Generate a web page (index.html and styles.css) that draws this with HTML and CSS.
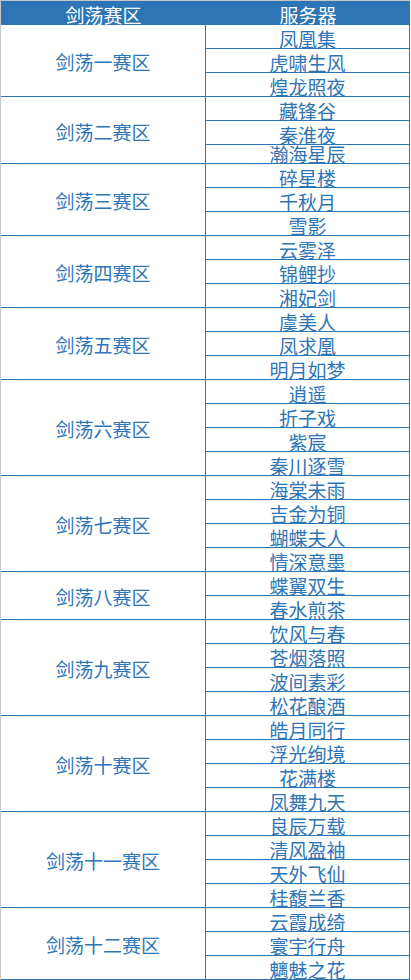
FILE: index.html
```html
<!DOCTYPE html>
<html lang="zh">
<head>
<meta charset="utf-8">
<title>剑荡赛区</title>
<link rel="stylesheet" href="styles.css">
</head>
<body>
<div class="sheet">
  <div class="head">
    <div class="head-zone">剑荡赛区</div>
    <div class="head-srv">服务器</div>
  </div>
  <div class="group">
    <div class="zone">剑荡一赛区</div>
    <div class="servers"><div class="srv">凤凰集</div><div class="srv">虎啸生风</div><div class="srv">煌龙照夜</div></div>
  </div>
  <div class="group">
    <div class="zone">剑荡二赛区</div>
    <div class="servers"><div class="srv">藏锋谷</div><div class="srv">秦淮夜</div><div class="srv short">瀚海星辰</div></div>
  </div>
  <div class="group">
    <div class="zone">剑荡三赛区</div>
    <div class="servers"><div class="srv">碎星楼</div><div class="srv">千秋月</div><div class="srv">雪影</div></div>
  </div>
  <div class="group">
    <div class="zone">剑荡四赛区</div>
    <div class="servers"><div class="srv">云雾泽</div><div class="srv">锦鲤抄</div><div class="srv">湘妃剑</div></div>
  </div>
  <div class="group">
    <div class="zone">剑荡五赛区</div>
    <div class="servers"><div class="srv">虞美人</div><div class="srv">凤求凰</div><div class="srv">明月如梦</div></div>
  </div>
  <div class="group">
    <div class="zone">剑荡六赛区</div>
    <div class="servers"><div class="srv">逍遥</div><div class="srv">折子戏</div><div class="srv">紫宸</div><div class="srv">秦川逐雪</div></div>
  </div>
  <div class="group">
    <div class="zone">剑荡七赛区</div>
    <div class="servers"><div class="srv">海棠未雨</div><div class="srv">吉金为铜</div><div class="srv">蝴蝶夫人</div><div class="srv">情深意墨</div></div>
  </div>
  <div class="group">
    <div class="zone">剑荡八赛区</div>
    <div class="servers"><div class="srv">蝶翼双生</div><div class="srv">春水煎茶</div></div>
  </div>
  <div class="group">
    <div class="zone">剑荡九赛区</div>
    <div class="servers"><div class="srv">饮风与春</div><div class="srv">苍烟落照</div><div class="srv">波间素彩</div><div class="srv">松花酿酒</div></div>
  </div>
  <div class="group">
    <div class="zone">剑荡十赛区</div>
    <div class="servers"><div class="srv">皓月同行</div><div class="srv">浮光绚境</div><div class="srv">花满楼</div><div class="srv">凤舞九天</div></div>
  </div>
  <div class="group">
    <div class="zone">剑荡十一赛区</div>
    <div class="servers"><div class="srv">良辰万载</div><div class="srv">清风盈袖</div><div class="srv">天外飞仙</div><div class="srv">桂馥兰香</div></div>
  </div>
  <div class="group">
    <div class="zone">剑荡十二赛区</div>
    <div class="servers"><div class="srv">云霞成绮</div><div class="srv">寰宇行舟</div><div class="srv">魑魅之花</div></div>
  </div>
</div>
</body>
</html>
```
FILE: styles.css
```css
html, body {
  margin: 0;
  padding: 0;
  background: #ffffff;
}

body {
  font-family: "Noto Sans CJK SC", "Microsoft YaHei", sans-serif;
  font-size: 19px;
  color: #2e75b6;
}

.sheet {
  width: 410px;
  box-sizing: border-box;
  border-top: 1px solid #c6c6c6;
  border-left: 1px solid #c6c6c6;
}

.head {
  display: flex;
  height: 24px;
  box-sizing: border-box;
  padding-top: 4px;
  line-height: 19px;
  background: #2e75b6;
  color: #ffffff;
}

.head-zone {
  width: 205px;
  text-align: center;
}

.head-srv {
  width: 204px;
  text-align: center;
}

.group {
  display: flex;
  border-bottom: 1px solid #2e75b6;
}

.zone {
  width: 204px;
  border-right: 1px solid #2e75b6;
  display: flex;
  align-items: center;
  justify-content: center;
  padding-top: 2px;
  line-height: 19px;
}

.servers {
  width: 203px;
  border-right: 1px solid #2e75b6;
}

.srv {
  height: 24px;
  box-sizing: border-box;
  padding-top: 4px;
  line-height: 19px;
  text-align: center;
  border-bottom: 1px solid #2e75b6;
}

.srv:last-child {
  height: 23px;
  border-bottom: none;
}

.srv.short {
  height: 18px;
  padding-top: 0;
  line-height: 18px;
}
```
